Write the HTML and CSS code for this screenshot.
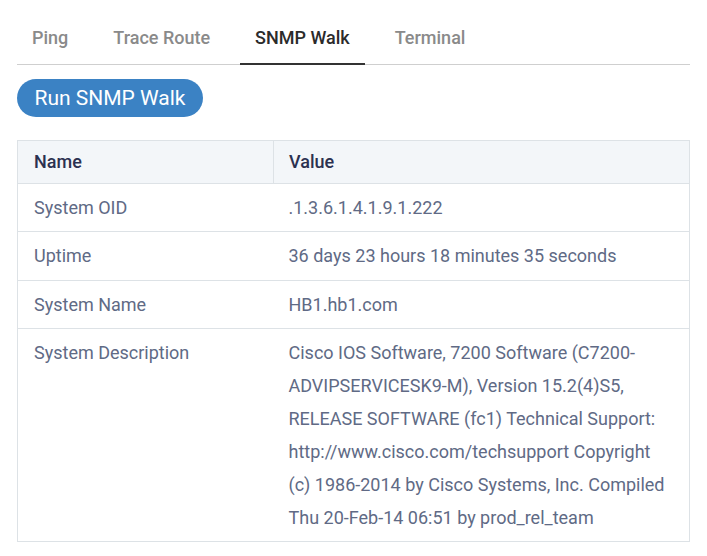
FILE: index.html
```html
<!DOCTYPE html>
<html>
<head>
<meta charset="utf-8">
<link rel="stylesheet" href="styles.css">
</head>
<body>
<div class="page">
  <nav class="tabs">
    <div class="tab">Ping</div>
    <div class="tab">Trace Route</div>
    <div class="tab active">SNMP Walk</div>
    <div class="tab">Terminal</div>
  </nav>
  <div class="actions">
    <button class="btn">Run SNMP Walk</button>
  </div>
  <table class="grid">
    <thead>
      <tr><th class="col-name">Name</th><th>Value</th></tr>
    </thead>
    <tbody>
      <tr><td>System OID</td><td>.1.3.6.1.4.1.9.1.222</td></tr>
      <tr><td>Uptime</td><td>36 days 23 hours 18 minutes 35 seconds</td></tr>
      <tr><td>System Name</td><td>HB1.hb1.com</td></tr>
      <tr><td>System Description</td><td>Cisco IOS Software, 7200 Software (C7200-ADVIPSERVICESK9-M), Version 15.2(4)S5, RELEASE SOFTWARE (fc1) Technical Support: http://www.cisco.com/techsupport Copyright (c) 1986-2014 by Cisco Systems, Inc. Compiled Thu 20-Feb-14 06:51 by prod_rel_team</td></tr>
    </tbody>
  </table>
</div>
</body>
</html>
```
FILE: styles.css
```css
* { box-sizing: border-box; }
html, body { margin: 0; padding: 0; background: #fff; }
body { font-family: Roboto, "Liberation Sans", sans-serif; }
.page { padding: 17px 17px 0 17px; }
.tabs {
  display: flex;
  gap: 15px;
  border-bottom: 1px solid #cfcfcf;
}
.tab {
  padding: 10px 15px 14px;
  font-size: 18px;
  line-height: 22px;
  font-weight: 500;
  color: #8a8a8a;
  margin-bottom: -1px;
  border-bottom: 2px solid transparent;
}
.tab.active {
  color: #2b2b2b;
  border-bottom-color: #333;
}
.actions { padding: 14px 0 23px; }
.btn {
  display: block;
  font-family: Roboto, "Liberation Sans", sans-serif;
  font-size: 21px;
  line-height: 26px;
  color: #fff;
  background: #3b82c4;
  border: none;
  border-radius: 19px;
  padding: 6px 16px;
  height: 38px;
  width: 186px;
}
.grid {
  width: 100%;
  border-collapse: collapse;
  border: 1px solid #dde2e6;
  font-size: 18px;
}
.grid th {
  background: #f3f6f9;
  color: #2b3150;
  font-weight: 500;
  text-align: left;
  padding: 10px 16px 10px 16px;
  line-height: 22px;
  border-bottom: 1px solid #dde2e6;
  border-right: 1px solid #dde2e6;
}
.grid th + th { padding-left: 15px; }
.grid th.col-name { width: 256px; }
.grid td {
  color: #606a85;
  line-height: 33px;
  padding: 7px 16px 7.3px;
  vertical-align: top;
  border-bottom: 1px solid #dde2e6;
}
.grid td + td { padding-left: 15px; }
```
